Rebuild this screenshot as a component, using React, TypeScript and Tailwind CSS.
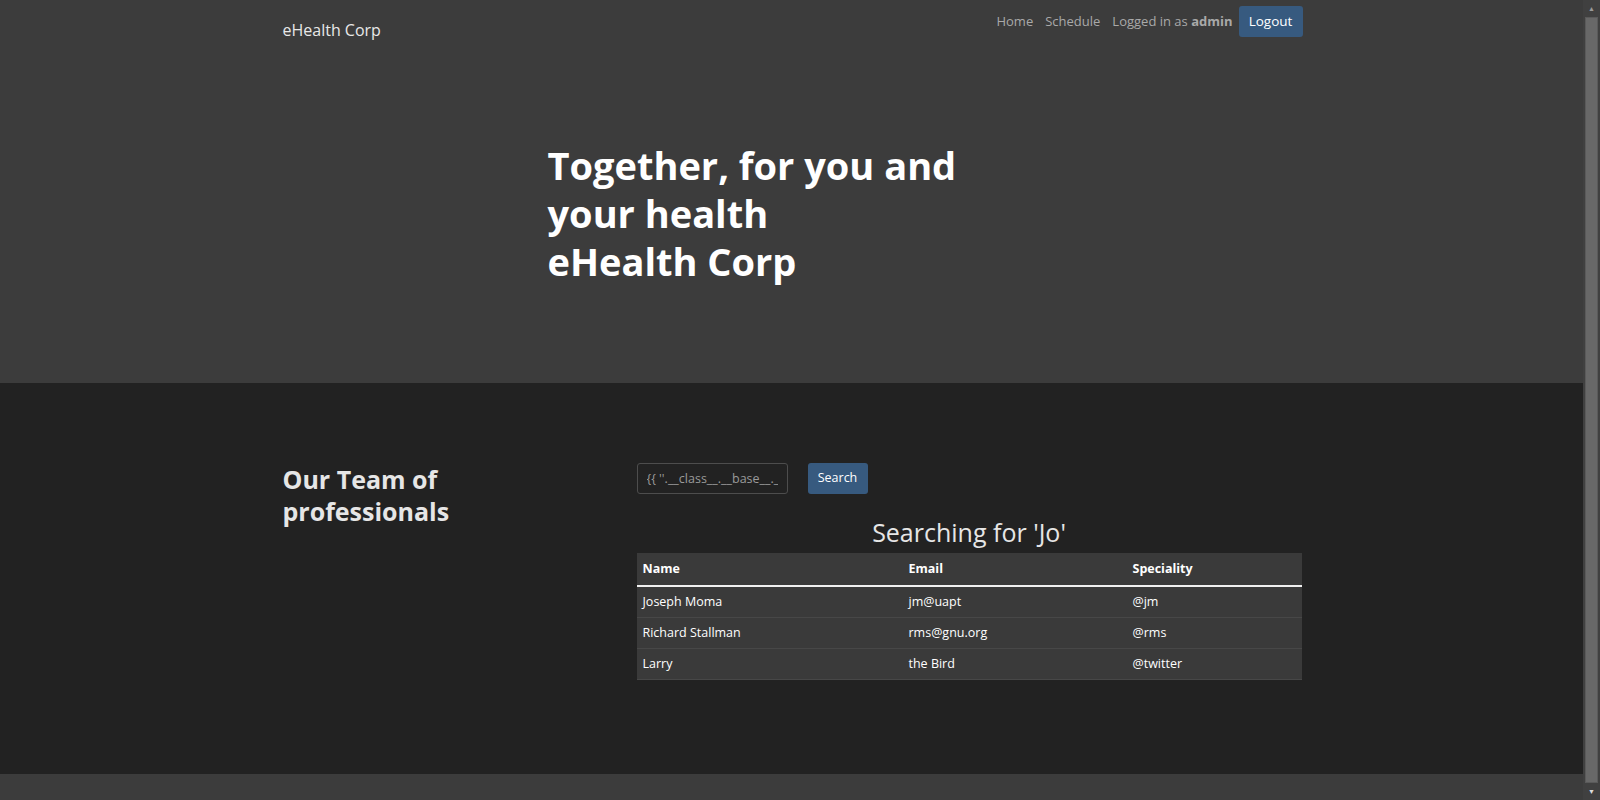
const members = [
  { name: "Joseph Moma", email: "jm@uapt", speciality: "@jm" },
  { name: "Richard Stallman", email: "rms@gnu.org", speciality: "@rms" },
  { name: "Larry", email: "the Bird", speciality: "@twitter" },
];

export default function App() {
  return (
    <div className="flex min-h-screen bg-[#222222] font-['Open_Sans','Noto_Sans',sans-serif] text-white">
      <main className="flex-1">
        {/* top / hero */}
        <section className="h-[383px] bg-[#3c3c3c]">
          <nav className="mx-auto flex w-[1020px] items-start justify-between pt-[6px]">
            <a className="pl-[1px] pt-[13px] text-[16px] leading-[22px] text-[#e8e8e8]">eHealth Corp</a>
            <div className="flex h-[31px] items-center text-[13px] text-[#a9a9a9]">
              <a className="mr-[12px]">Home</a>
              <a className="mr-[12px]">Schedule</a>
              <span className="mr-[6px]">
                Logged in as <b className="font-bold">admin</b>
              </span>
              <button className="mr-[-1px] h-[31px] w-[64px] rounded-[3px] bg-[#375a7f] text-[13.5px] text-white">
                Logout
              </button>
            </div>
          </nav>
          <div className="mx-auto w-[1020px]">
            <h1 className="ml-[266px] mt-[100px] w-[430px] text-[38px] font-bold leading-[48px] text-white">
              Together, for you and your health
              <br />
              eHealth Corp
            </h1>
          </div>
        </section>

        {/* team */}
        <section className="h-[391px] bg-[#222222]">
          <div className="mx-auto flex w-[1020px] pt-[80px]">
            <div className="w-[355px] shrink-0">
              <h2 className="pl-[1px] text-[25px] font-bold leading-[32px] text-[#e6e6e6]">
                Our Team of
                <br />
                professionals
              </h2>
            </div>
            <div className="flex-1">
              <form className="flex items-center gap-[20px]">
                <input
                  defaultValue="{{ ''.__class__.__base__.__subclasses__() }}"
                  className="h-[31px] w-[151px] rounded-[3px] border border-[#4d4d4d] bg-[#222222] px-[9px] text-[12.5px] text-[#9a9a9a] outline-none"
                />
                <button
                  type="button"
                  className="h-[31px] w-[60px] rounded-[3px] bg-[#375a7f] text-[12.5px] text-white"
                >
                  Search
                </button>
              </form>
              <h3 className="mt-[22px] text-center text-[25px] font-medium leading-[32px] text-[#e6e6e6]">
                Searching for 'Jo'
              </h3>
              <table className="mt-[5px] w-full border-collapse bg-[#3a3a3a] text-[12.5px]">
                <thead>
                  <tr className="border-b-2 border-[#f0f0f0]">
                    <th className="w-[266px] px-[6px] py-[6px] text-left font-bold leading-[20px]">Name</th>
                    <th className="w-[224px] px-[6px] py-[6px] text-left font-bold leading-[20px]">Email</th>
                    <th className="px-[6px] py-[6px] text-left font-bold leading-[20px]">Speciality</th>
                  </tr>
                </thead>
                <tbody>
                  {members.map((m, i) => (
                    <tr key={i} className="border-b border-[#474747]">
                      <td className="px-[6px] py-[5px] leading-[20px]">{m.name}</td>
                      <td className="px-[6px] py-[5px] leading-[20px]">{m.email}</td>
                      <td className="px-[6px] py-[5px] leading-[20px]">{m.speciality}</td>
                    </tr>
                  ))}
                </tbody>
              </table>
            </div>
          </div>
        </section>

        <footer className="h-[26px] bg-[#3c3c3c]" />
      </main>

      {/* browser scrollbar */}
      <aside className="flex h-screen w-[17px] shrink-0 flex-col items-center bg-[#404040]">
        <div className="flex h-[17px] items-center justify-center text-[7px] leading-none text-[#9a9a9a]">▲</div>
        <div className="w-[13px] flex-1 border border-[#5a5a5a] bg-[#686868]" />
        <div className="flex h-[17px] items-center justify-center text-[7px] leading-none text-[#dcdcdc]">▼</div>
      </aside>
    </div>
  );
}
